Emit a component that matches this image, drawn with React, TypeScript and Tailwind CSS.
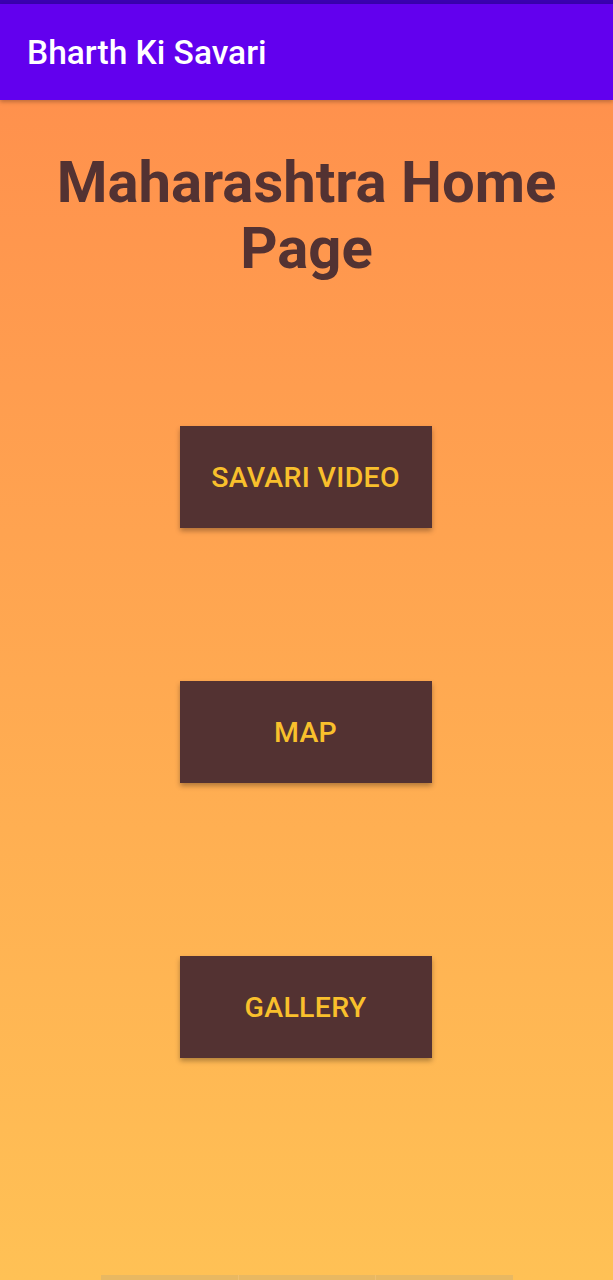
import React from 'react';

const NavButton: React.FC<{ label: string }> = ({ label }) => (
  <button className="w-[252px] h-[102px] pt-[3px] bg-[#533232] text-[#f9c02c] text-[28.5px] font-medium tracking-[0.3px] shadow-[0_3px_5px_rgba(0,0,0,0.3)]">
    {label}
  </button>
);

const App: React.FC = () => {
  return (
    <div className="w-[613px] h-[1280px] overflow-hidden flex flex-col" style={{ fontFamily: 'Roboto, "Liberation Sans", sans-serif' }}>
      <div className="h-[4px] bg-[#3a00b0]" />
      <header className="h-[96px] bg-[#6200ee] flex items-center pl-[27px] pt-[2px] shadow-[0_2px_4px_rgba(0,0,0,0.25)] z-10">
        <h1 className="text-white text-[33.5px] font-medium">Bharth Ki Savari</h1>
      </header>
      <main className="flex-1 bg-gradient-to-b from-[#ff914d] to-[#ffc155] flex flex-col items-center relative">
        <h2 className="mt-[49px] text-center text-[58px] leading-[66px] font-bold text-[#533232] px-[30px]">
          Maharashtra Home Page
        </h2>
        <div className="mt-[145px] flex flex-col items-center pr-[2px]">
          <NavButton label="SAVARI VIDEO" />
          <div className="h-[153px]" />
          <NavButton label="MAP" />
          <div className="h-[173px]" />
          <NavButton label="GALLERY" />
        </div>
        <div className="absolute bottom-0 left-[101px] w-[412px] h-[5px] bg-[#e8b862] flex">
          <div className="flex-1 border-r border-[#f0c070]" />
          <div className="flex-1 border-r border-[#f0c070]" />
          <div className="flex-1" />
        </div>
      </main>
    </div>
  );
};

export default App;
